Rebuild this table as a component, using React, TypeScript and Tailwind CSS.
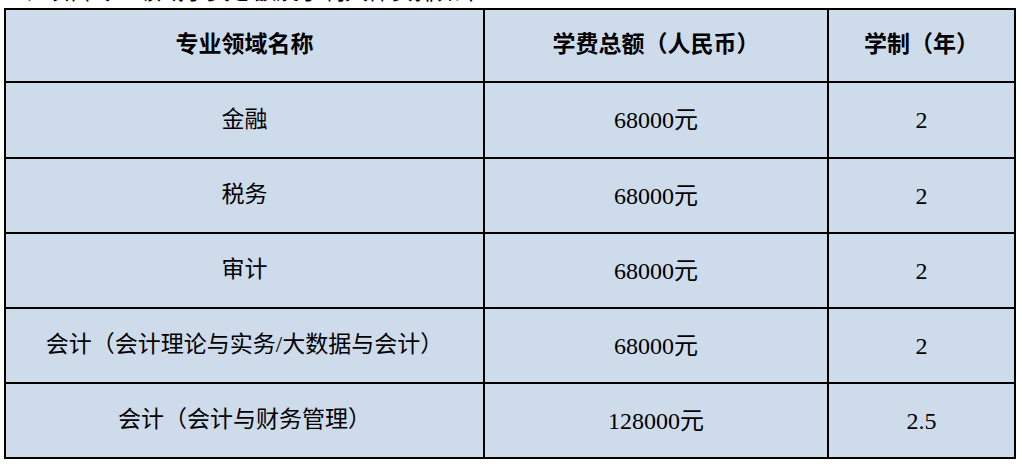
import React from 'react';

const rows = [
    { name: '金融', fee: '68000元', years: '2', h: 'h-[76px]' },
    { name: '税务', fee: '68000元', years: '2', h: 'h-[75px]' },
    { name: '审计', fee: '68000元', years: '2', h: 'h-[75px]' },
    { name: '会计（会计理论与实务/大数据与会计）', fee: '68000元', years: '2', h: 'h-[75px]' },
    { name: '会计（会计与财务管理）', fee: '128000元', years: '2.5', h: 'h-[75px]' },
];

const cell = 'flex items-center justify-center border-r-2 border-b-2 border-black bg-[#cedbeb] text-[23px]';

export default function App() {
    return (
        <div className="bg-white w-[1022px] h-[466px] overflow-hidden text-black font-['Liberation_Serif','Noto_Sans_CJK_SC',serif]">
            {/* line above the table, only its lower edge is in view */}
            <div className="h-[4px] overflow-hidden">
                <p className="mt-[-20px] text-[23px] leading-[23px] whitespace-nowrap">
                    二、项目专业领域学费总额及学制具体安排如下：
                </p>
            </div>

            <div className="mt-[4px] ml-[4px] grid grid-cols-[479px_344px_187px] border-l-2 border-t-2 border-black w-[1012px]">
                <div className={`${cell} h-[73px] font-bold`}>专业领域名称</div>
                <div className={`${cell} h-[73px] font-bold`}>学费总额（人民币）</div>
                <div className={`${cell} h-[73px] font-bold`}>学制（年）</div>

                {rows.map((r) => (
                    <React.Fragment key={r.name}>
                        <div className={`${cell} ${r.h}`}>{r.name}</div>
                        <div className={`${cell} ${r.h} text-[24px]`}>{r.fee}</div>
                        <div className={`${cell} ${r.h} text-[24px]`}>{r.years}</div>
                    </React.Fragment>
                ))}
            </div>
        </div>
    );
}
